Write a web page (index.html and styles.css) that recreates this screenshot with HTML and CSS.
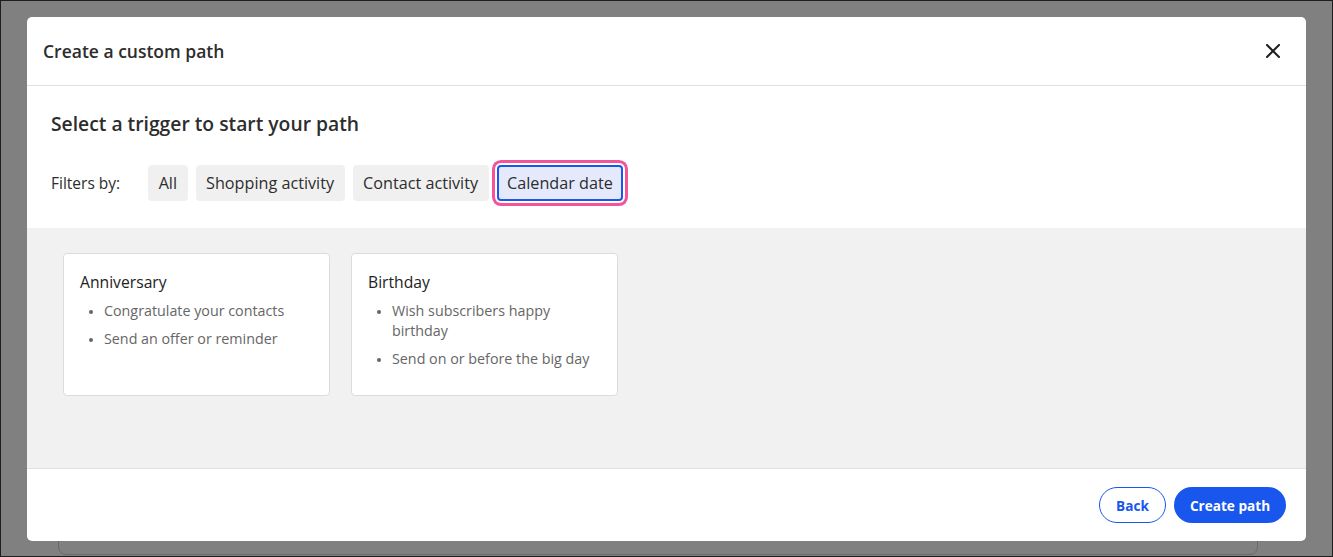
FILE: index.html
```html
<!DOCTYPE html>
<html lang="en">
<head>
<meta charset="utf-8">
<title>Create a custom path</title>
<link rel="stylesheet" href="styles.css">
</head>
<body>
<div class="screen">
  <div class="backdrop-card"></div>
  <div class="modal">
    <header class="modal-header">
      <h1 class="modal-title">Create a custom path</h1>
      <button class="close-btn" aria-label="Close">
        <svg width="14" height="14" viewBox="0 0 14 14"><path d="M1 1L13 13M13 1L1 13" stroke="#1f1f1f" stroke-width="2" stroke-linecap="square" fill="none"/></svg>
      </button>
    </header>
    <section class="intro">
      <h2 class="intro-title">Select a trigger to start your path</h2>
      <div class="filters">
        <span class="filters-label">Filters by:</span>
        <button class="chip">All</button>
        <button class="chip">Shopping activity</button>
        <button class="chip">Contact activity</button>
        <button class="chip chip-active">Calendar date</button>
      </div>
    </section>
    <section class="triggers">
      <div class="card">
        <div class="card-title">Anniversary</div>
        <ul class="card-list">
          <li>Congratulate your contacts</li>
          <li>Send an offer or reminder</li>
        </ul>
      </div>
      <div class="card">
        <div class="card-title">Birthday</div>
        <ul class="card-list">
          <li>Wish subscribers happy birthday</li>
          <li>Send on or before the big day</li>
        </ul>
      </div>
    </section>
    <footer class="modal-footer">
      <button class="btn btn-outline">Back</button>
      <button class="btn btn-primary">Create path</button>
    </footer>
  </div>
</div>
</body>
</html>
```

FILE: styles.css
```css
* { box-sizing: border-box; }
html, body { margin: 0; padding: 0; }
body {
  font-family: "Open Sans", "Lato", sans-serif;
  color: #2b2b2b;
}
.screen {
  position: relative;
  width: 1333px;
  height: 557px;
  background: #808080;
  border: 1px solid #1e1e1e;
  padding: 16px 0 0 26px;
  overflow: hidden;
}
.backdrop-card {
  position: absolute;
  left: 57px;
  width: 1200px;
  top: 400px;
  bottom: 1px;
  border: 1px solid #6a6a6a;
  border-radius: 8px;
}
.modal {
  position: relative;
  width: 1279px;
  height: 524px;
  background: #fff;
  border-radius: 5px;
  display: flex;
  flex-direction: column;
  overflow: hidden;
}
.modal-header {
  height: 69px;
  flex: none;
  border-bottom: 1px solid #e0e0e0;
  display: flex;
  align-items: center;
  justify-content: space-between;
  padding: 0 26px 0 16px;
}
.modal-title {
  margin: 0;
  font-size: 17.5px;
  font-weight: 600;
  color: #2d2d2d;
}
.close-btn {
  border: 0;
  background: none;
  padding: 0;
  width: 14px;
  height: 14px;
  display: flex;
}
.intro {
  height: 142px;
  flex: none;
  padding: 26px 24px 0 24px;
}
.intro-title {
  margin: 0;
  font-size: 19.3px;
  line-height: 24px;
  font-weight: 600;
  color: #2d2d2d;
}
.filters {
  margin-top: 29px;
  display: flex;
  align-items: center;
  gap: 8px;
}
.filters-label {
  font-size: 15.5px;
  color: #2d2d2d;
  margin-right: 20px;
}
.chip {
  height: 36px;
  border: 0;
  border-radius: 4px;
  background: #f0f0f0;
  font-family: inherit;
  font-size: 16.2px;
  color: #2d2d2d;
  padding: 0 10.5px;
}
.chip-active {
  background: #e4eafc;
  border: 2px solid #1856ed;
  padding: 0 8.5px;
  box-shadow: 0 0 0 2px #fff, 0 0 0 5px #f2559a;
}
.triggers {
  flex: 1;
  background: #f1f1f1;
  padding: 25px 36px;
  display: flex;
  align-items: flex-start;
  gap: 21px;
}
.card {
  width: 267px;
  height: 143px;
  background: #fff;
  border: 1px solid #dcdcdc;
  border-radius: 4px;
  padding: 17px 16px;
}
.card-title {
  font-size: 15.7px;
  line-height: 22px;
  color: #222;
}
.card-list {
  margin: 8px 0 0 0;
  padding: 0 0 0 24px;
  font-size: 14.3px;
  line-height: 20px;
  color: #666;
}
.card-list li {
  margin-bottom: 8px;
}
.card-list li::marker {
  font-size: 11px;
}
.modal-footer {
  height: 73px;
  flex: none;
  border-top: 1px solid #e0e0e0;
  display: flex;
  align-items: center;
  justify-content: flex-end;
  gap: 8px;
  padding: 0 20px;
}
.btn {
  height: 36px;
  border-radius: 18px;
  font-family: inherit;
  font-size: 13.6px;
  font-weight: 700;
  padding: 0;
}
.btn-outline {
  background: #fff;
  color: #1856ed;
  border: 1px solid #1856ed;
  width: 67px;
}
.btn-primary {
  background: #1856ed;
  color: #fff;
  border: 0;
  width: 112px;
}
```
